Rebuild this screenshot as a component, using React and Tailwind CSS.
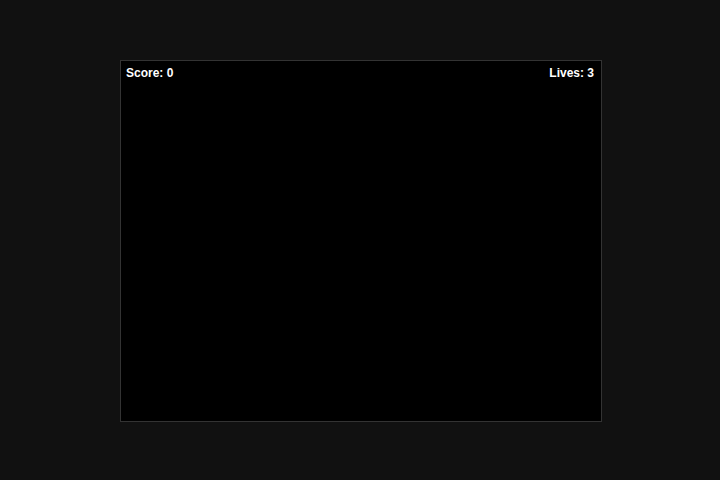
export default function App() {
  const score = 0
  const lives = 3

  return (
    <div className="flex h-screen w-full items-center justify-center bg-[#111111]">
      <div className="relative ml-[2px] mt-[2px] h-[362px] w-[482px] border border-[#333333] bg-black">
        <div className="absolute left-[5px] right-[7px] top-[3px] flex justify-between text-[12px] font-bold text-white [font-family:'Liberation_Sans',Arial,sans-serif]">
          <span>Score: {score}</span>
          <span>Lives: {lives}</span>
        </div>
      </div>
    </div>
  )
}
